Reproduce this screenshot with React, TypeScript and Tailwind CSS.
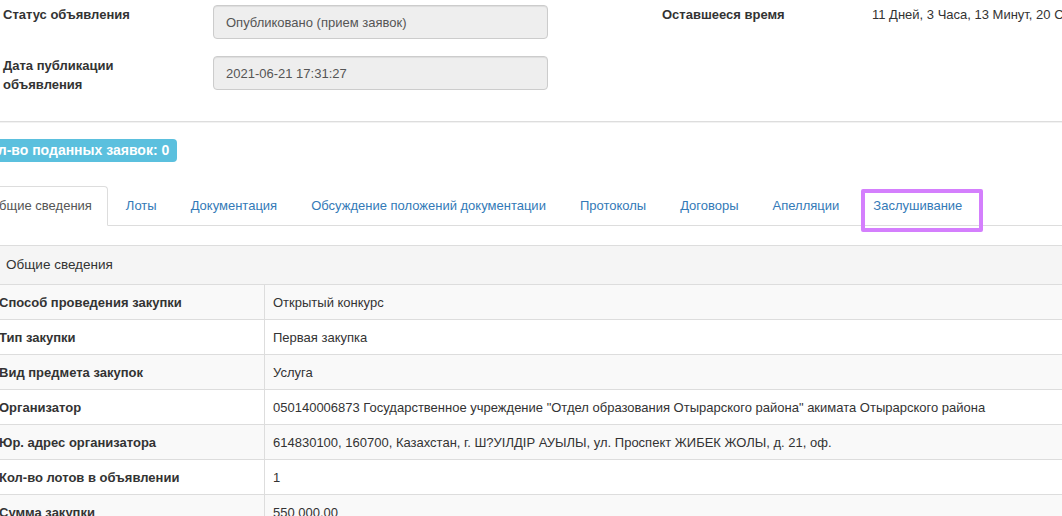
import React from 'react';

const tabs = [
    'Общие сведения',
    'Лоты',
    'Документация',
    'Обсуждение положений документации',
    'Протоколы',
    'Договоры',
    'Апелляции',
    'Заслушивание',
];

const rows: [string, string][] = [
    ['Способ проведения закупки', 'Открытый конкурс'],
    ['Тип закупки', 'Первая закупка'],
    ['Вид предмета закупок', 'Услуга'],
    ['Организатор', '050140006873 Государственное учреждение "Отдел образования Отырарского района" акимата Отырарского района'],
    ['Юр. адрес организатора', '614830100, 160700, Казахстан, г. Ш?УІЛДІР АУЫЛЫ, ул. Проспект ЖИБЕК ЖОЛЫ, д. 21, оф.'],
    ['Кол-во лотов в объявлении', '1'],
    ['Сумма закупки', '550 000.00'],
];

const ReadonlyInput: React.FC<{ value: string }> = ({ value }) => (
    <div className="w-[335px] h-[34px] shrink-0 flex items-center px-[12px] border border-[#ccc] rounded-[4px] bg-[#eee] text-[#555] shadow-[inset_0_1px_1px_rgba(0,0,0,0.075)]">
        {value}
    </div>
);

export default function App() {
    return (
        <div className="w-[1062px] h-[516px] overflow-hidden bg-white font-['Liberation_Sans',Arial,sans-serif] text-[13px] leading-[19px] text-[#333]">
            {/* Announcement header */}
            <div className="flex items-start pt-[5px] whitespace-nowrap">
                <div className="w-[210px] shrink-0 ml-[3px] font-bold">Статус объявления</div>
                <ReadonlyInput value="Опубликовано (прием заявок)" />
                <div className="w-[210px] shrink-0 ml-[114px] font-bold">Оставшееся время</div>
                <div className="shrink-0">11 Дней, 3 Часа, 13 Минут, 20 Секунд</div>
            </div>
            <div className="flex items-start mt-[17px]">
                <div className="w-[210px] shrink-0 ml-[3px] font-bold">
                    Дата публикации
                    <br />
                    объявления
                </div>
                <ReadonlyInput value="2021-06-21 17:31:27" />
            </div>

            <div className="mt-[27px] border-t border-[#ddd]" />
            <div className="h-px bg-[#f2f2f2]" />

            {/* Bids counter */}
            <div className="mt-[16px] flex">
                <span className="ml-[-27px] px-[8px] py-[2px] rounded-[4px] bg-[#5bc0de] text-white text-[14px] font-bold whitespace-nowrap">
                    Кол-во поданных заявок: 0
                </span>
            </div>

            {/* Tabs */}
            <ul className="mt-[24px] ml-[-27px] mr-[-40px] flex border-b border-[#ddd] whitespace-nowrap">
                {tabs.map((tab, i) => (
                    <li key={tab} className="relative mr-[2px] -mb-px">
                        <a
                            className={
                                i === 0
                                    ? 'block px-[15px] py-[10px] leading-[18px] border border-[#ddd] border-b-transparent rounded-t-[4px] bg-white text-[#555]'
                                    : 'block px-[15px] py-[10px] leading-[18px] border border-transparent text-[#337ab7]'
                            }
                        >
                            {tab}
                        </a>
                        {i === tabs.length - 1 && (
                            <div className="absolute left-[4px] top-[3px] w-[122px] h-[43px] border-[4px] border-[#d47ffd] rounded-[2px]" />
                        )}
                    </li>
                ))}
            </ul>

            {/* General info panel */}
            <div className="mt-[19px] ml-[-10px] mr-[-40px] border border-[#ddd] rounded-t-[4px]">
                <div className="px-[15px] py-[10px] leading-[18px] text-[13.5px] bg-[#f5f5f5] border-b border-[#ddd]">Общие сведения</div>
                {rows.map(([label, value], i) => (
                    <div
                        key={label}
                        className={
                            i % 2 === 0
                                ? 'grid grid-cols-[273px_1fr] h-[35px] border-b border-[#ddd] bg-[#f9f9f9]'
                                : 'grid grid-cols-[273px_1fr] h-[35px] border-b border-[#ddd] bg-white'
                        }
                    >
                        <div className="flex items-center px-[8px] font-bold whitespace-nowrap">{label}</div>
                        <div className="flex items-center px-[8px] border-l border-[#ddd] whitespace-nowrap">{value}</div>
                    </div>
                ))}
            </div>
        </div>
    );
}
